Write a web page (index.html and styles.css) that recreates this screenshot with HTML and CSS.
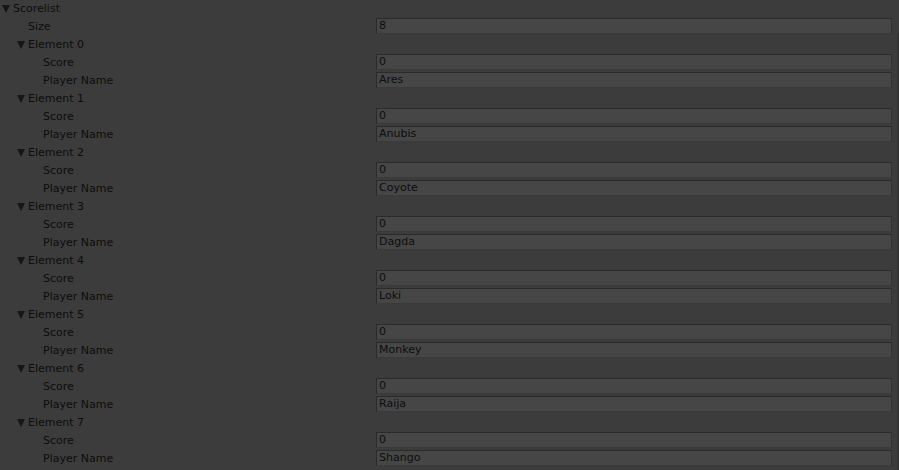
FILE: index.html
```html
<!DOCTYPE html>
<html lang="en">
<head>
  <meta charset="UTF-8" />
  <title>Inspector</title>
  <link rel="stylesheet" href="styles.css">
</head>
<body>
  <div class="panel">
    <div class="inspector" id="inspector">
      <div class="row">
        <div class="label lvl0"><span class="fold"></span>Scorelist</div>
      </div>
      <div class="row">
        <div class="label lvl1">Size</div>
        <div class="field">8</div>
      </div>
    </div>
    <div class="scroll-edge"></div>
  </div>

  <script>
    // Elementleri oluştur
    const names = ["Ares", "Anubis", "Coyote", "Dagda", "Loki", "Monkey", "Raija", "Shango"];
    const inspector = document.getElementById("inspector");
    names.forEach((name, i) => {
      inspector.insertAdjacentHTML("beforeend", `
        <div class="row">
          <div class="label lvl1"><span class="fold"></span>Element ${i}</div>
        </div>
        <div class="row">
          <div class="label lvl2">Score</div>
          <div class="field">0</div>
        </div>
        <div class="row">
          <div class="label lvl2">Player Name</div>
          <div class="field">${name}</div>
        </div>
      `);
    });
  </script>
</body>
</html>
```

FILE: styles.css
```css
body {
  margin: 0;
  background: #3c3c3c;
  font-family: "DejaVu Sans", sans-serif;
  font-size: 11px;
  color: #0d0d0d;
  overflow: hidden;
}
.panel {
  display: flex;
  height: 470px;
}
.inspector {
  flex: 1;
  margin-top: -1px;
}
.scroll-edge {
  width: 2px;
  margin-top: 33px;
  background: #353535;
}
.row {
  display: flex;
  align-items: center;
  height: 18px;
}
.label {
  width: 376px;
  box-sizing: border-box;
  display: flex;
  align-items: center;
  white-space: nowrap;
}
.lvl0 { padding-left: 2px; }
.lvl1 { padding-left: 28px; }
.lvl2 { padding-left: 43px; }
.lvl1 .fold { margin-left: -11px; }

.fold {
  width: 0;
  height: 0;
  border-left: 4px solid transparent;
  border-right: 4px solid transparent;
  border-top: 8px solid #161616;
  margin-right: 3px;
  margin-top: 1px;
}
.field {
  flex: 1;
  height: 16px;
  box-sizing: border-box;
  margin-right: 5px;
  padding-left: 2px;
  line-height: 14px;
  background: #464646;
  border: 1px solid #2a2a2a;
  border-right-color: #333;
  border-bottom-color: #3a3a3a;
  white-space: nowrap;
}
```
